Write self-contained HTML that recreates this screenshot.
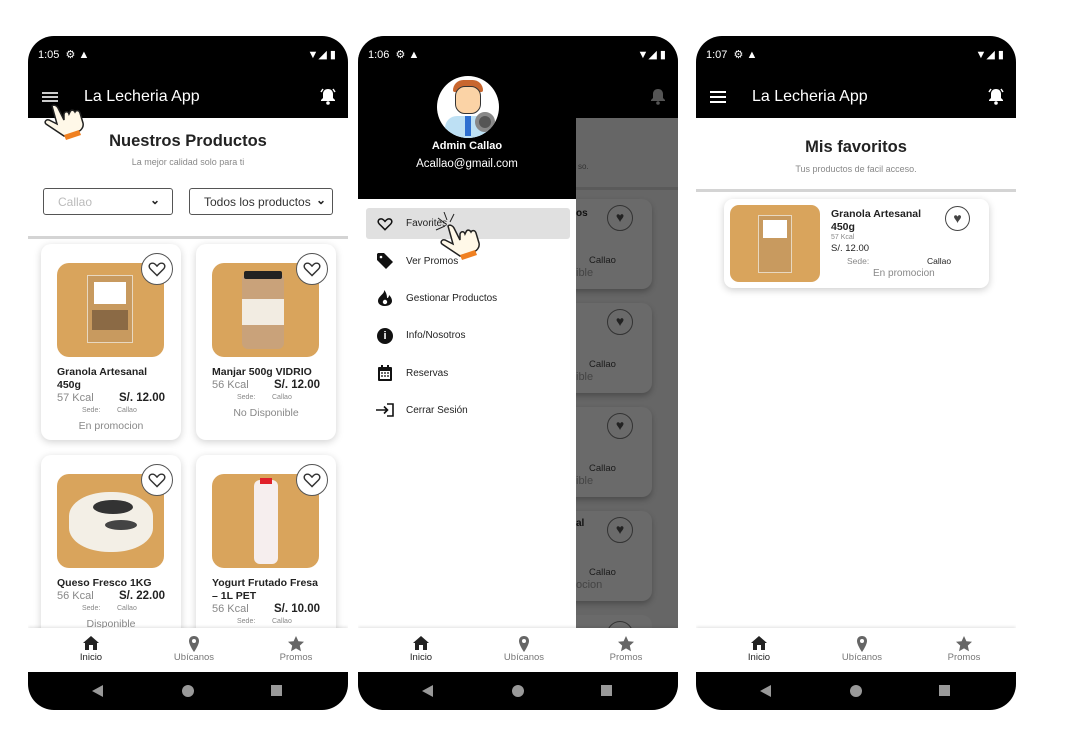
<!DOCTYPE html>
<html><head><meta charset="utf-8"><style>
*{box-sizing:border-box;margin:0;padding:0}
body{width:1073px;height:735px;background:#fff;position:relative;overflow:hidden;font-family:"Liberation Sans",sans-serif;color:#222}
.ph{position:absolute;top:36px;width:320px;height:674px;border-radius:26px;overflow:hidden;background:#fff}
.a{position:absolute}
.hdr{position:absolute;left:0;top:0;width:320px;height:82px;background:#000}
.st{position:absolute;top:12px;left:10px;color:#fff;font-size:11px}
.st2{position:absolute;top:12px;right:12px;color:#fff;font-size:11px}
.ttl{position:absolute;left:56px;top:52px;color:#fff;font-size:16px}
.bell{position:absolute;right:12px;top:51px}
.nav{position:absolute;left:0;top:592px;width:320px;height:44px;background:#fff;box-shadow:0 -1px 3px rgba(0,0,0,.12)}
.nav div{position:absolute;top:0;width:80px;text-align:center;font-size:9.5px;color:#777}
.nav div span{display:block;margin-top:24px}
.nav svg{position:absolute;left:32px;top:8px}
.sys{position:absolute;left:0;top:636px;width:320px;height:38px;background:#000}
.card{position:absolute;width:140px;height:196px;background:#fff;border-radius:10px;box-shadow:0 2px 8px rgba(0,0,0,.18)}
.img{position:absolute;left:16px;top:19px;width:107px;height:94px;border-radius:12px;background:#d9a45c}
.hrt{position:absolute;left:100px;top:9px;width:32px;height:32px;border-radius:50%;background:#fff;border:1.5px solid #555}
.hrt svg{position:absolute;left:6px;top:7px}
.cn{position:absolute;left:16px;top:122px;font-size:10.5px;font-weight:bold;color:#222;line-height:13px;width:120px}
.kc{position:absolute;left:16px;font-size:11px;color:#888}
.pr{position:absolute;right:16px;font-size:11.5px;font-weight:bold;color:#222}
.sd{position:absolute;font-size:7px;color:#888}
.ss{position:absolute;left:0;width:140px;text-align:center;font-size:10.5px;color:#888}
.h1{position:absolute;left:0;width:320px;text-align:center;font-weight:bold;font-size:16.5px;color:#222}
.sub{position:absolute;left:0;width:320px;text-align:center;font-size:9px;color:#888}
.dv{position:absolute;left:0;width:320px;height:3px;background:#d4d4d4}
.mi{position:absolute;left:48px;font-size:10px;color:#222}
</style></head><body>

<!-- PHONE 1 -->
<div class="ph" style="left:28px">
 <div class="hdr">
  <div class="st">1:05 &nbsp;⚙ ▲</div><div class="st2">▼◢ ▮</div>
  <div class="a" style="left:14px;top:56px;width:16px;height:10px;border-top:2px solid #ccc;border-bottom:2px solid #ccc"><div style="margin-top:2px;height:2px;background:#ccc"></div></div>
  <div class="ttl">La Lecheria App</div>
  <svg class="bell" width="16" height="18" viewBox="0 0 16 18"><path d="M8 2c-3 0-5 2-5 5v4l-2 2v1h14v-1l-2-2V7c0-3-2-5-5-5z" fill="#fff"/><circle cx="8" cy="16" r="1.8" fill="#fff"/><path d="M1 5 3 2M15 5 13 2" stroke="#fff" stroke-width="1.5"/></svg>
 </div>
 <svg class="a" style="left:14px;top:62px" width="50" height="42" viewBox="0 0 50 42"><path d="M10 8c2-2 5 0 6 2l6 12 0-6c1-3 4-3 5 0l1-2c1-3 4-2 5 0 1-2 4-2 5 1l3 10c1 4-2 8-6 9L22 38 4 26c-2-2 0-5 3-4l8 4z" fill="#fff8e8" stroke="#222" stroke-width="1.5"/><path d="M22 37l15-5 2 5-15 5z" fill="#f08020"/></svg>
 <div class="h1" style="top:96px">Nuestros Productos</div>
 <div class="sub" style="top:121px">La mejor calidad solo para ti</div>
 <div class="a" style="left:15px;top:152px;width:130px;height:27px;border:1.5px solid #555;border-radius:3px;font-size:12px;color:#bbb;padding:6px 14px">Callao<span style="position:absolute;right:12px;top:4px;color:#222;font-weight:bold">⌄</span></div>
 <div class="a" style="left:161px;top:152px;width:144px;height:27px;border:1.5px solid #555;border-radius:3px;font-size:12px;color:#333;padding:6px 14px;white-space:nowrap;overflow:hidden">Todos los productos<span style="position:absolute;right:6px;top:4px;color:#222;font-weight:bold">⌄</span></div>
 <div class="dv" style="top:200px"></div>

 <div class="card" style="left:13px;top:208px">
  <div class="img"><div class="a" style="left:30px;top:12px;width:46px;height:68px;background:#c89a5f;border:1px solid #e8d8c0"><div class="a" style="left:6px;top:6px;width:32px;height:22px;background:#fff"></div><div class="a" style="left:4px;top:34px;width:36px;height:20px;background:#8b6a45"></div></div></div>
  <div class="hrt"><svg width="18" height="16" viewBox="0 0 24 22"><path d="M12 20 3 11C0 8 1 3 6 3c3 0 5 3 6 4 1-1 3-4 6-4 5 0 6 5 3 8z" fill="none" stroke="#333" stroke-width="2"/></svg></div>
  <div class="cn">Granola Artesanal<br>450g</div>
  <div class="kc" style="top:148px">57 Kcal</div><div class="pr" style="top:148px">S/. 12.00</div>
  <div class="sd" style="left:41px;top:163px">Sede:</div><div class="sd" style="left:76px;top:163px">Callao</div>
  <div class="ss" style="top:176px">En promocion</div>
 </div>
 <div class="card" style="left:168px;top:208px">
  <div class="img"><div class="a" style="left:30px;top:10px;width:42px;height:76px;background:#c9a27a;border-radius:6px"><div class="a" style="left:2px;top:-2px;width:38px;height:8px;background:#222;border-radius:2px"></div><div class="a" style="left:0;top:26px;width:42px;height:26px;background:#f2ece2"></div></div></div>
  <div class="hrt"><svg width="18" height="16" viewBox="0 0 24 22"><path d="M12 20 3 11C0 8 1 3 6 3c3 0 5 3 6 4 1-1 3-4 6-4 5 0 6 5 3 8z" fill="none" stroke="#333" stroke-width="2"/></svg></div>
  <div class="cn">Manjar 500g VIDRIO</div>
  <div class="kc" style="top:135px">56 Kcal</div><div class="pr" style="top:135px">S/. 12.00</div>
  <div class="sd" style="left:41px;top:150px">Sede:</div><div class="sd" style="left:76px;top:150px">Callao</div>
  <div class="ss" style="top:163px">No Disponible</div>
 </div>
 <div class="card" style="left:13px;top:419px">
  <div class="img"><div class="a" style="left:12px;top:18px;width:84px;height:60px;background:#f3efe6;border-radius:40px/24px"><div class="a" style="left:24px;top:8px;width:40px;height:14px;background:#333;border-radius:50%"></div><div class="a" style="left:36px;top:28px;width:32px;height:10px;background:#444;border-radius:50%"></div></div></div>
  <div class="hrt"><svg width="18" height="16" viewBox="0 0 24 22"><path d="M12 20 3 11C0 8 1 3 6 3c3 0 5 3 6 4 1-1 3-4 6-4 5 0 6 5 3 8z" fill="none" stroke="#333" stroke-width="2"/></svg></div>
  <div class="cn">Queso Fresco 1KG</div>
  <div class="kc" style="top:135px">56 Kcal</div><div class="pr" style="top:135px">S/. 22.00</div>
  <div class="sd" style="left:41px;top:150px">Sede:</div><div class="sd" style="left:76px;top:150px">Callao</div>
  <div class="ss" style="top:163px">Disponible</div>
 </div>
 <div class="card" style="left:168px;top:419px">
  <div class="img"><div class="a" style="left:42px;top:6px;width:24px;height:84px;background:#f6eeee;border-radius:6px"><div class="a" style="left:6px;top:-2px;width:12px;height:6px;background:#e0202a"></div></div></div>
  <div class="hrt"><svg width="18" height="16" viewBox="0 0 24 22"><path d="M12 20 3 11C0 8 1 3 6 3c3 0 5 3 6 4 1-1 3-4 6-4 5 0 6 5 3 8z" fill="none" stroke="#333" stroke-width="2"/></svg></div>
  <div class="cn">Yogurt Frutado Fresa<br>– 1L PET</div>
  <div class="kc" style="top:148px">56 Kcal</div><div class="pr" style="top:148px">S/. 10.00</div>
  <div class="sd" style="left:41px;top:163px">Sede:</div><div class="sd" style="left:76px;top:163px">Callao</div>
 </div>

 <div class="nav">
  <div style="left:23px;color:#222"><svg width="16" height="14" viewBox="0 0 16 14"><path d="M8 0 0 7h2v7h4V9h4v5h4V7h2z" fill="#222"/></svg><span>Inicio</span></div>
  <div style="left:126px"><svg width="16" height="16" viewBox="0 0 16 16"><path d="M8 0C5 0 3 2 3 5c0 4 5 11 5 11s5-7 5-11c0-3-2-5-5-5z" fill="#666"/><circle cx="8" cy="5" r="2" fill="#fff"/></svg><span>Ubícanos</span></div>
  <div style="left:228px"><svg width="16" height="16" viewBox="0 0 16 16"><path d="M8 0l2.4 5.2 5.6.6-4.2 3.8 1.2 5.6L8 12.4 3 15.2l1.2-5.6L0 5.8l5.6-.6z" fill="#666"/></svg><span>Promos</span></div>
 </div>
 <div class="sys"><svg class="a" style="left:64px;top:13px" width="12" height="12"><path d="M11 0v12L0 6z" fill="#999"/></svg><div class="a" style="left:154px;top:13px;width:12px;height:12px;border-radius:50%;background:#999"></div><div class="a" style="left:243px;top:13px;width:11px;height:11px;background:#999"></div></div>
</div>

<!-- PHONE 2 -->
<div class="ph" style="left:358px;background:#666">
 <div class="hdr" style="background:#000"><svg class="bell" width="16" height="18" viewBox="0 0 16 18"><path d="M8 2c-3 0-5 2-5 5v4l-2 2v1h14v-1l-2-2V7c0-3-2-5-5-5z" fill="#555"/><circle cx="8" cy="16" r="1.8" fill="#555"/></svg></div>
 <div class="a" style="left:200px;top:82px;width:120px;height:72px;background:#666;border-bottom:3px solid #5a5a5a"></div>
 <div class="a" style="left:220px;top:126px;font-size:8px;color:#333">so.</div>
 <div class="a" style="left:150px;top:163px;width:144px;height:90px;background:#6a6a6a;border-radius:10px;box-shadow:0 3px 6px rgba(0,0,0,.25)"></div>
 <div class="a" style="left:150px;top:267px;width:144px;height:90px;background:#6a6a6a;border-radius:10px;box-shadow:0 3px 6px rgba(0,0,0,.25)"></div>
 <div class="a" style="left:150px;top:371px;width:144px;height:90px;background:#6a6a6a;border-radius:10px;box-shadow:0 3px 6px rgba(0,0,0,.25)"></div>
 <div class="a" style="left:150px;top:475px;width:144px;height:90px;background:#6a6a6a;border-radius:10px;box-shadow:0 3px 6px rgba(0,0,0,.25)"></div>
 <div class="a" style="left:150px;top:579px;width:144px;height:90px;background:#6a6a6a;border-radius:10px"></div>
 <div class="a" style="left:249px;top:169px;width:26px;height:26px;border:1.5px solid #333;border-radius:50%;font-size:14px;text-align:center;line-height:23px;color:#222">♥</div>
 <div class="a" style="left:249px;top:273px;width:26px;height:26px;border:1.5px solid #333;border-radius:50%;font-size:14px;text-align:center;line-height:23px;color:#222">♥</div>
 <div class="a" style="left:249px;top:377px;width:26px;height:26px;border:1.5px solid #333;border-radius:50%;font-size:14px;text-align:center;line-height:23px;color:#222">♥</div>
 <div class="a" style="left:249px;top:481px;width:26px;height:26px;border:1.5px solid #333;border-radius:50%;font-size:14px;text-align:center;line-height:23px;color:#222">♥</div>
 <div class="a" style="left:249px;top:585px;width:26px;height:26px;border:1.5px solid #333;border-radius:50%"></div>
 <div class="a" style="left:231px;top:219px;font-size:9.5px;color:#1a1a1a">Callao</div><div class="a" style="left:218px;top:231px;font-size:11px;color:#444">ible</div>
 <div class="a" style="left:231px;top:323px;font-size:9.5px;color:#1a1a1a">Callao</div><div class="a" style="left:218px;top:335px;font-size:11px;color:#444">ible</div>
 <div class="a" style="left:231px;top:427px;font-size:9.5px;color:#1a1a1a">Callao</div><div class="a" style="left:218px;top:439px;font-size:11px;color:#444">ible</div>
 <div class="a" style="left:231px;top:531px;font-size:9.5px;color:#1a1a1a">Callao</div><div class="a" style="left:218px;top:543px;font-size:11px;color:#444">ocion</div>
 <div class="a" style="left:218px;top:172px;font-size:10px;font-weight:bold;color:#111">os</div>
 <div class="a" style="left:218px;top:482px;font-size:10px;font-weight:bold;color:#111">al</div>

 <div class="a" style="left:0;top:0;width:218px;height:592px;background:#fff">
  <div class="a" style="left:0;top:0;width:218px;height:163px;background:#000">
   <div class="st">1:06 &nbsp;⚙ ▲</div>
   <div class="a" style="left:79px;top:40px;width:62px;height:62px;border-radius:50%;background:#fff;overflow:hidden">
    <div class="a" style="left:16px;top:4px;width:30px;height:12px;background:#c8662e;border-radius:12px 12px 2px 2px"></div>
    <div class="a" style="left:18px;top:10px;width:26px;height:28px;background:#fbd3a6;border-radius:10px;border:1px solid #333"></div>
    <div class="a" style="left:8px;top:40px;width:46px;height:24px;background:#bde0f4;border-radius:12px 12px 0 0"></div>
    <div class="a" style="left:28px;top:40px;width:6px;height:20px;background:#2e6fd0"></div>
    <div class="a" style="left:38px;top:36px;width:20px;height:20px;border-radius:50%;background:#555;border:4px solid #888"></div>
   </div>
   <div class="a" style="left:0;top:104px;width:218px;text-align:center;color:#fff;font-weight:bold;font-size:11px">Admin Callao</div>
   <div class="a" style="left:0;top:122px;width:218px;text-align:center;color:#fff;font-size:11.5px">Acallao@gmail.com</div>
  </div>
  <div class="a" style="left:8px;top:172px;width:204px;height:31px;background:#e0e0e0;border-radius:3px"></div>
  <svg class="a" style="left:19px;top:181px" width="16" height="14" viewBox="0 0 24 22"><path d="M12 20 3 11C0 8 1 3 6 3c3 0 5 3 6 4 1-1 3-4 6-4 5 0 6 5 3 8z" fill="none" stroke="#111" stroke-width="2.4"/></svg>
  <div class="mi" style="top:182px">Favorites</div>
  <svg class="a" style="left:19px;top:217px" width="16" height="16" viewBox="0 0 16 16"><path d="M0 1v6l9 9 7-7-9-9H1z" fill="#111"/><circle cx="4" cy="4" r="1.3" fill="#fff"/></svg>
  <div class="mi" style="top:220px">Ver Promos</div>
  <svg class="a" style="left:20px;top:254px" width="14" height="16" viewBox="0 0 14 16"><path d="M6 0c1 4-6 6-6 11 0 3 3 5 7 5s7-2 7-5c0-3-2-5-3-6 0 2-1 3-2 3 0-3-1-6-3-8z" fill="#111"/><circle cx="7" cy="12" r="2.2" fill="#fff"/></svg>
  <div class="mi" style="top:257px">Gestionar Productos</div>
  <div class="a" style="left:19px;top:292px;width:16px;height:16px;border-radius:50%;background:#111;color:#fff;font-size:11px;font-weight:bold;text-align:center;line-height:16px">i</div>
  <div class="mi" style="top:294px">Info/Nosotros</div>
  <svg class="a" style="left:20px;top:329px" width="14" height="16" viewBox="0 0 14 16"><rect x="0" y="2" width="14" height="14" rx="1" fill="#111"/><rect x="2" y="6" width="10" height="8" fill="#fff"/><rect x="3" y="0" width="2" height="3" fill="#111"/><rect x="9" y="0" width="2" height="3" fill="#111"/><path d="M3 8h2M6 8h2M9 8h2M3 11h2M6 11h2M9 11h2" stroke="#111" stroke-width="1.3"/></svg>
  <div class="mi" style="top:332px">Reservas</div>
  <svg class="a" style="left:18px;top:367px" width="18" height="14" viewBox="0 0 18 14"><path d="M0 7h11M8 3.5 11.5 7 8 10.5M11 1h6v12h-6" fill="none" stroke="#111" stroke-width="1.6"/></svg>
  <div class="mi" style="top:369px">Cerrar Sesión</div>
  <svg class="a" style="left:76px;top:176px" width="56" height="58" viewBox="0 0 56 58"><path d="M4 6l8 6M10 0l3 8M20 2l-4 8M2 18l9-4" stroke="#222" stroke-width="1"/><path d="M14 14c2-2 5 0 6 2l6 12 0-6c1-3 4-3 5 0l1-2c1-3 4-2 5 0 1-2 4-2 5 1l3 10c1 4-2 8-6 9L26 44 8 32c-2-2 0-5 3-4l8 4z" fill="#fff8e8" stroke="#222" stroke-width="1.5"/><path d="M26 43l15-5 2 5-15 5z" fill="#f08020"/></svg>
 </div>
 <div class="nav">
  <div style="left:23px;color:#222"><svg width="16" height="14" viewBox="0 0 16 14"><path d="M8 0 0 7h2v7h4V9h4v5h4V7h2z" fill="#222"/></svg><span>Inicio</span></div>
  <div style="left:126px"><svg width="16" height="16" viewBox="0 0 16 16"><path d="M8 0C5 0 3 2 3 5c0 4 5 11 5 11s5-7 5-11c0-3-2-5-5-5z" fill="#666"/><circle cx="8" cy="5" r="2" fill="#fff"/></svg><span>Ubícanos</span></div>
  <div style="left:228px"><svg width="16" height="16" viewBox="0 0 16 16"><path d="M8 0l2.4 5.2 5.6.6-4.2 3.8 1.2 5.6L8 12.4 3 15.2l1.2-5.6L0 5.8l5.6-.6z" fill="#666"/></svg><span>Promos</span></div>
 </div>
 <div class="sys"><svg class="a" style="left:64px;top:13px" width="12" height="12"><path d="M11 0v12L0 6z" fill="#999"/></svg><div class="a" style="left:154px;top:13px;width:12px;height:12px;border-radius:50%;background:#999"></div><div class="a" style="left:243px;top:13px;width:11px;height:11px;background:#999"></div></div>
 <div class="st2" style="position:absolute">▼◢ ▮</div>
</div>

<!-- PHONE 3 -->
<div class="ph" style="left:696px">
 <div class="hdr">
  <div class="st">1:07 &nbsp;⚙ ▲</div><div class="st2">▼◢ ▮</div>
  <div class="a" style="left:14px;top:55px;width:16px;height:12px;border-top:2px solid #fff;border-bottom:2px solid #fff"><div style="margin-top:3px;height:2px;background:#fff"></div></div>
  <div class="ttl">La Lecheria App</div>
  <svg class="bell" width="16" height="18" viewBox="0 0 16 18"><path d="M8 2c-3 0-5 2-5 5v4l-2 2v1h14v-1l-2-2V7c0-3-2-5-5-5z" fill="#fff"/><circle cx="8" cy="16" r="1.8" fill="#fff"/><path d="M1 5 3 2M15 5 13 2" stroke="#fff" stroke-width="1.5"/></svg>
 </div>
 <div class="h1" style="top:102px">Mis favoritos</div>
 <div class="sub" style="top:128px">Tus productos de facil acceso.</div>
 <div class="dv" style="top:153px"></div>
 <div class="a" style="left:28px;top:163px;width:265px;height:89px;background:#fff;border-radius:9px;box-shadow:0 2px 8px rgba(0,0,0,.2)">
  <div class="a" style="left:6px;top:6px;width:90px;height:77px;border-radius:9px;background:#d9a45c"><div class="a" style="left:28px;top:10px;width:34px;height:58px;background:#c89a5f;border:1px solid #e8d8c0"><div class="a" style="left:4px;top:4px;width:24px;height:18px;background:#fff"></div></div></div>
  <div class="a" style="left:107px;top:9px;font-size:10.5px;font-weight:bold;line-height:13px">Granola Artesanal<br>450g</div>
  <div class="a" style="left:107px;top:35px;font-size:7px;color:#888">57 Kcal</div>
  <div class="a" style="left:107px;top:44px;font-size:9.5px;color:#222">S/. 12.00</div>
  <div class="a" style="left:123px;top:57px;font-size:8.5px;color:#888">Sede:</div>
  <div class="a" style="left:203px;top:57px;font-size:8.5px;color:#222">Callao</div>
  <div class="a" style="left:149px;top:69px;font-size:10px;color:#888">En promocion</div>
  <div class="a" style="left:221px;top:7px;width:25px;height:25px;border:1.5px solid #444;border-radius:50%;text-align:center;line-height:22px;font-size:14px;color:#444">♥</div>
 </div>
 <div class="nav">
  <div style="left:23px;color:#222"><svg width="16" height="14" viewBox="0 0 16 14"><path d="M8 0 0 7h2v7h4V9h4v5h4V7h2z" fill="#222"/></svg><span>Inicio</span></div>
  <div style="left:126px"><svg width="16" height="16" viewBox="0 0 16 16"><path d="M8 0C5 0 3 2 3 5c0 4 5 11 5 11s5-7 5-11c0-3-2-5-5-5z" fill="#666"/><circle cx="8" cy="5" r="2" fill="#fff"/></svg><span>Ubícanos</span></div>
  <div style="left:228px"><svg width="16" height="16" viewBox="0 0 16 16"><path d="M8 0l2.4 5.2 5.6.6-4.2 3.8 1.2 5.6L8 12.4 3 15.2l1.2-5.6L0 5.8l5.6-.6z" fill="#666"/></svg><span>Promos</span></div>
 </div>
 <div class="sys"><svg class="a" style="left:64px;top:13px" width="12" height="12"><path d="M11 0v12L0 6z" fill="#999"/></svg><div class="a" style="left:154px;top:13px;width:12px;height:12px;border-radius:50%;background:#999"></div><div class="a" style="left:243px;top:13px;width:11px;height:11px;background:#999"></div></div>
</div>
</body></html>
